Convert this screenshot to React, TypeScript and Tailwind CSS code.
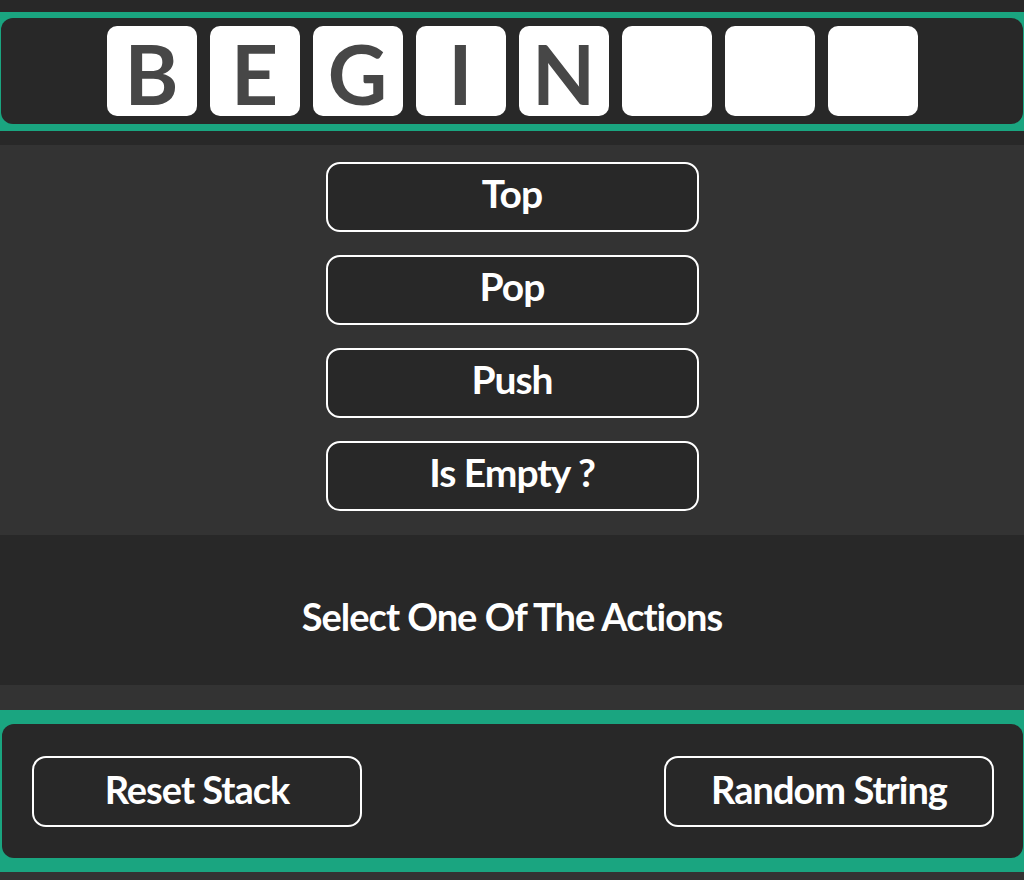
import React from 'react';

const font = { fontFamily: 'Lato, "Liberation Sans", sans-serif' };

const letters = ['B', 'E', 'G', 'I', 'N', '', '', ''];
const actions = ['Top', 'Pop', 'Push', 'Is Empty ?'];

export default function App() {
    return (
        <div className="min-h-[880px] bg-[#333333] font-bold text-white" style={font}>
            {/* stack display */}
            <div className="bg-[#282828] pt-3 pb-[14px]">
                <div className="bg-[#1aa580] pt-[6px] pb-[7px] pl-[1px] pr-[1px]">
                    <div className="flex justify-center gap-[13px] rounded-[12px] bg-[#282828] py-2">
                        {letters.map((l, i) => (
                            <div
                                key={i}
                                className="flex h-[90px] w-[90px] items-center justify-center rounded-[10px] bg-white pt-1 text-[82px] leading-none text-[#474747]"
                            >
                                {l}
                            </div>
                        ))}
                    </div>
                </div>
            </div>

            {/* actions */}
            <div className="flex flex-col items-center gap-[23px] pt-[17px] pb-[24px]">
                {actions.map((a) => (
                    <button
                        key={a}
                        type="button"
                        className="h-[70px] w-[373px] rounded-[14px] border-2 border-white bg-[#282828] pb-2 text-[39px] leading-none tracking-[-1px]"
                    >
                        {a}
                    </button>
                ))}
            </div>

            {/* status */}
            <div className="flex h-[150px] items-center justify-center bg-[#282828] pt-3 text-[38px] leading-none tracking-[-1px]">
                Select One Of The Actions
            </div>

            {/* controls */}
            <div className="mt-[25px] bg-[#1aa580] py-[14px] pl-[2px] pr-[1px]">
                <div className="flex h-[134px] items-center justify-between rounded-[12px] bg-[#282828] pl-[30px] pr-[29px]">
                    <button
                        type="button"
                        className="h-[71px] w-[330px] rounded-[14px] border-2 border-white bg-[#282828] pb-1 text-[38px] leading-none tracking-[-1px]"
                    >
                        Reset Stack
                    </button>
                    <button
                        type="button"
                        className="h-[71px] w-[330px] rounded-[14px] border-2 border-white bg-[#282828] pb-1 text-[38px] leading-none tracking-[-1px]"
                    >
                        Random String
                    </button>
                </div>
            </div>
        </div>
    );
}
